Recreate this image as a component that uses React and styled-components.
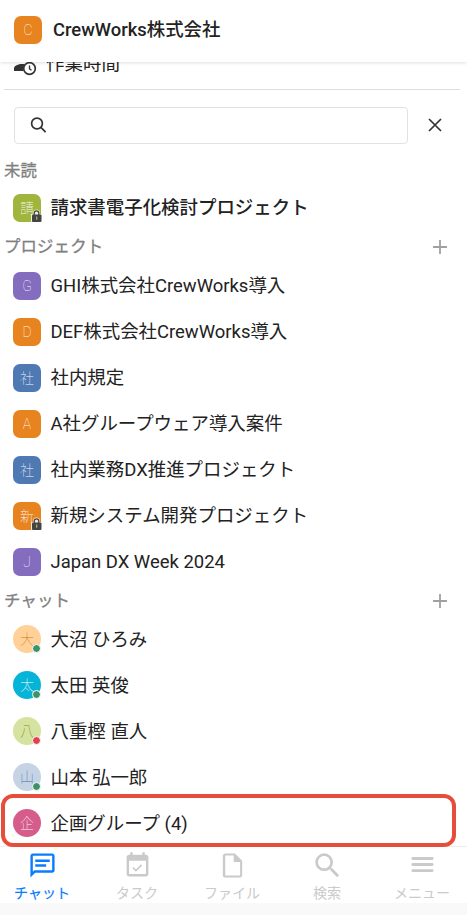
import styled, { createGlobalStyle } from 'styled-components';

const GlobalStyle = createGlobalStyle`
    * {
        box-sizing: border-box;
    }
    body {
        margin: 0;
        background: #fff;
        color: #222;
        font-family: Roboto, "Noto Sans CJK JP", sans-serif;
        overflow: hidden;
    }
`
const Screen = styled.div`
    position: relative;
    display: flex;
    flex-direction: column;
    width: 467px;
    height: 915px;
    overflow: hidden;
`
const Header = styled.header`
    position: relative;
    z-index: 1;
    display: flex;
    align-items: center;
    flex: none;
    gap: 11px;
    height: 62px;
    padding: 0 14px 2px;
    background: #fff;
    box-shadow: 0 0 4px rgba(0, 0, 0, 0.2);
`
const Title = styled.h1`
    margin: 0;
    font-size: 18.4px;
    font-weight: 500;
    line-height: 28px;
    white-space: nowrap;
`
const Content = styled.main`
    flex: 1;
    min-height: 0;
`
const WorkTime = styled.div`
    display: flex;
    align-items: center;
    gap: 9px;
    height: 46px;
    margin: -18px 7px 0 4px;
    padding: 0 0 6px 9px;
    border-bottom: 1px solid #dedede;
    font-size: 18.5px;
    line-height: 28px;
`
const SearchBar = styled.div`
    display: flex;
    align-items: center;
    gap: 19px;
    height: 70px;
    padding: 0 24px 0 14px;
`
const SearchField = styled.div`
    display: flex;
    align-items: center;
    width: 394px;
    height: 37px;
    padding-left: 15px;
    border: 1px solid #e2e2e2;
    border-radius: 4px;
`
const SectionHead = styled.div`
    display: flex;
    align-items: center;
    justify-content: space-between;
    height: ${({ $height }) => $height || 32}px;
    padding: 0 20px ${({ $lift }) => $lift || 0}px 4px;
    color: #808080;
    font-size: 16.4px;
    font-weight: 400;
    letter-spacing: 0.15px;
    line-height: 24px;
    -webkit-text-stroke: 0.3px #808080;
`
const Row = styled.div`
    display: flex;
    align-items: center;
    gap: 9.5px;
    height: 46px;
    padding-left: 13px;
    font-size: 18.45px;
    font-weight: ${({ $unread }) => ($unread ? 500 : 400)};
    line-height: 28px;
    white-space: nowrap;
`
const Name = styled.span`
    padding-top: ${({ $drop }) => $drop}px;
`
const Avatar = styled.span`
    position: relative;
    display: flex;
    align-items: center;
    justify-content: center;
    flex: none;
    width: 28px;
    height: 28px;
    border-radius: ${({ $round }) => ($round ? '50%' : '7px')};
    background: ${({ $color }) => $color};
    color: ${({ $ink }) => $ink || 'rgba(255, 255, 255, 0.95)'};
    font-size: 14px;
    font-weight: 100;
    line-height: 20px;
`
const Status = styled.span`
    position: absolute;
    right: 0;
    bottom: 0;
    width: 9px;
    height: 9px;
    border: 1px solid #fff;
    border-radius: 50%;
    background: ${({ $busy }) => ($busy ? '#e2434b' : '#3d9268')};
`
const LockBadge = styled.svg`
    position: absolute;
    right: -2px;
    bottom: -1px;
`
const Highlight = styled.div`
    position: absolute;
    top: 794px;
    left: 1px;
    width: 455px;
    height: 53px;
    border: 4px solid #e64d3b;
    border-radius: 12px;
`
const Nav = styled.nav`
    display: flex;
    flex: none;
    height: 57px;
    margin-left: -5.5px;
    border-top: 1px solid #eee;
`
const NavItem = styled.div`
    display: flex;
    flex-direction: column;
    align-items: center;
    flex: none;
    gap: 3px;
    width: 95px;
    padding-top: 4px;
    color: ${({ $active }) => ($active ? '#0a7cff' : '#cacaca')};
    font-size: 14px;
    font-weight: 400;
    line-height: 20px;
    -webkit-text-stroke: ${({ $active }) => ($active ? '0.2px' : '0')};
`
const BottomInset = styled.div`
    flex: none;
    height: 12px;
    background: #f9f9f9;
`

const projects = [
    { mark: 'G', name: 'GHI株式会社CrewWorks導入', color: '#846dbf' },
    { mark: 'D', name: 'DEF株式会社CrewWorks導入', color: '#e8841f' },
    { mark: '社', name: '社内規定', color: '#4f79b3' },
    { mark: 'A', name: 'A社グループウェア導入案件', color: '#e8841f' },
    { mark: '社', name: '社内業務DX推進プロジェクト', color: '#4f79b3' },
    { mark: '新', name: '新規システム開発プロジェクト', color: '#e8841f', locked: true },
    { mark: 'J', name: 'Japan DX Week 2024', color: '#846dbf' },
]

const chats = [
    { mark: '大', name: '大沼 ひろみ', color: '#ffd199', ink: '#cf7a22', status: 'online' },
    { mark: '太', name: '太田 英俊', color: '#06b4d8', ink: '#fff', status: 'online' },
    { mark: '八', name: '八重樫 直人', color: '#d5e3a1', ink: '#75892c', status: 'busy' },
    { mark: '山', name: '山本 弘一郎', color: '#c5d3e5', ink: '#4a72ae', status: 'online' },
    { mark: '企', name: '企画グループ (4)', color: '#d65c8b' },
]

function Lock() {
    return (
        <LockBadge width="13" height="14" viewBox="0 0 13 14">
            <path d="M1 5H3V4a3.500 3.500 0 0 1 7 0v1h2.500v8.500H1z" fill="#fff" opacity=".8" />
            <path d="M4.200 6V4.200a2.300 2.300 0 0 1 4.600 0V6" fill="none" stroke="#444" strokeWidth="1.300" />
            <rect x="2" y="5.500" width="9.500" height="7.500" rx="1" fill="#444" />
            <path d="M6.700 7.500v3.300" stroke="#b9ad7c" strokeWidth="1.200" />
        </LockBadge>
    )
}

function Plus() {
    return (
        <svg width="14" height="14" viewBox="0 0 14 14">
            <path d="M7 0v14M0 7h14" stroke="#a0a0a0" strokeWidth="1.800" />
        </svg>
    )
}

function Item({ item, round, unread }) {
    return (
        <Row $unread={unread}>
            <Avatar $round={round} $color={item.color} $ink={item.ink}>
                {item.mark}
                {item.locked && <Lock />}
                {item.status && <Status $busy={item.status === 'busy'} />}
            </Avatar>
            <Name $drop={round ? 2 : 0}>{item.name}</Name>
        </Row>
    )
}

function NavIcon({ children }) {
    return (
        <svg width="29" height="29" viewBox="0 0 24 24" fill="currentColor">
            {children}
        </svg>
    )
}

function App() {
    return (
        <Screen>
            <GlobalStyle />
            <Header>
                <Avatar $color="#e8841f">C</Avatar>
                <Title>CrewWorks株式会社</Title>
            </Header>
            <Content>
                <WorkTime>
                    <svg width="24" height="24" viewBox="0 0 24 24" fill="#333">
                        <circle cx="9" cy="6" r="4" />
                        <path d="M1 19v-2.500c0-3 4.500-4.500 8-4.500 1 0 2 .1 3 .4A7 7 0 0 0 10.500 19z" />
                        <circle cx="16.500" cy="16.500" r="5.800" fill="#fff" stroke="#333" strokeWidth="1.700" />
                        <path d="M16.500 13.500v3.300l2 1.500" fill="none" stroke="#333" strokeWidth="1.300" />
                    </svg>
                    作業時間
                </WorkTime>
                <SearchBar>
                    <SearchField>
                        <svg width="16" height="16" viewBox="0 0 16 16" fill="none" stroke="#333" strokeWidth="1.700">
                            <circle cx="7" cy="6.500" r="5.400" />
                            <path d="M10.900 10.400l4.700 4.700" />
                        </svg>
                    </SearchField>
                    <svg width="16" height="16" viewBox="0 0 16 16" fill="none" stroke="#333" strokeWidth="1.700">
                        <path d="M2 2l12 12M14 2L2 14" />
                    </svg>
                </SearchBar>
                <SectionHead $height={25} $lift={4}>未読</SectionHead>
                <Item
                    unread
                    item={{ mark: '請', name: '請求書電子化検討プロジェクト', color: '#9fb53c', locked: true }}
                />
                <SectionHead>
                    プロジェクト
                    <Plus />
                </SectionHead>
                {projects.map((item) => (
                    <Item key={item.name} item={item} />
                ))}
                <SectionHead $height={31}>
                    チャット
                    <Plus />
                </SectionHead>
                {chats.map((item) => (
                    <Item key={item.name} item={item} round />
                ))}
            </Content>
            <Nav>
                <NavItem $active>
                    <NavIcon>
                        <path d="M4 4h16v12H5.170L4 17.170V4m0-2c-1.100 0-1.990.9-1.990 2L2 22l4-4h14c1.100 0 2-.9 2-2V4c0-1.100-.9-2-2-2H4zM6 11h9v2H6zM6 7h12v2H6z" />
                    </NavIcon>
                    チャット
                </NavItem>
                <NavItem>
                    <NavIcon>
                        <path d="M15.900 11.900L15 11l-4.300 4.300-2-2-.9.9 2.900 2.900 5.200-5.200zM19 3h-1V1h-2v2H8V1H6v2H5c-1.110 0-1.990.9-1.990 2L3 19c0 1.100.89 2 2 2h14c1.100 0 2-.9 2-2V5c0-1.100-.9-2-2-2zm0 16H5V8h14v11z" />
                    </NavIcon>
                    タスク
                </NavItem>
                <NavItem>
                    <NavIcon>
                        <path d="M14 2H6c-1.100 0-1.990.9-1.990 2L4 20c0 1.100.89 2 1.990 2H18c1.100 0 2-.9 2-2V8l-6-6zM6 20.300V3.700h7v5.300h5.300v11.300H6z" />
                    </NavIcon>
                    ファイル
                </NavItem>
                <NavItem>
                    <NavIcon>
                        <path d="M15.500 14h-.79l-.28-.27A6.471 6.471 0 0 0 16 9.500 6.500 6.500 0 1 0 9.500 16c1.610 0 3.090-.59 4.230-1.570l.27.28v.79l5 4.990L20.490 19l-4.990-5zm-6 0C7.010 14 5 11.990 5 9.500S7.010 5 9.500 5 14 7.010 14 9.500 11.990 14 9.500 14z" transform="translate(-1.500 -1.500) scale(1.130)" />
                    </NavIcon>
                    検索
                </NavItem>
                <NavItem>
                    <NavIcon>
                        <path d="M4 6.200h16M4 11.200h16M4 16.200h16" stroke="currentColor" strokeWidth="2.400" strokeLinecap="round" />
                    </NavIcon>
                    メニュー
                </NavItem>
            </Nav>
            <BottomInset />
            <Highlight />
        </Screen>
    )
}

export default App
